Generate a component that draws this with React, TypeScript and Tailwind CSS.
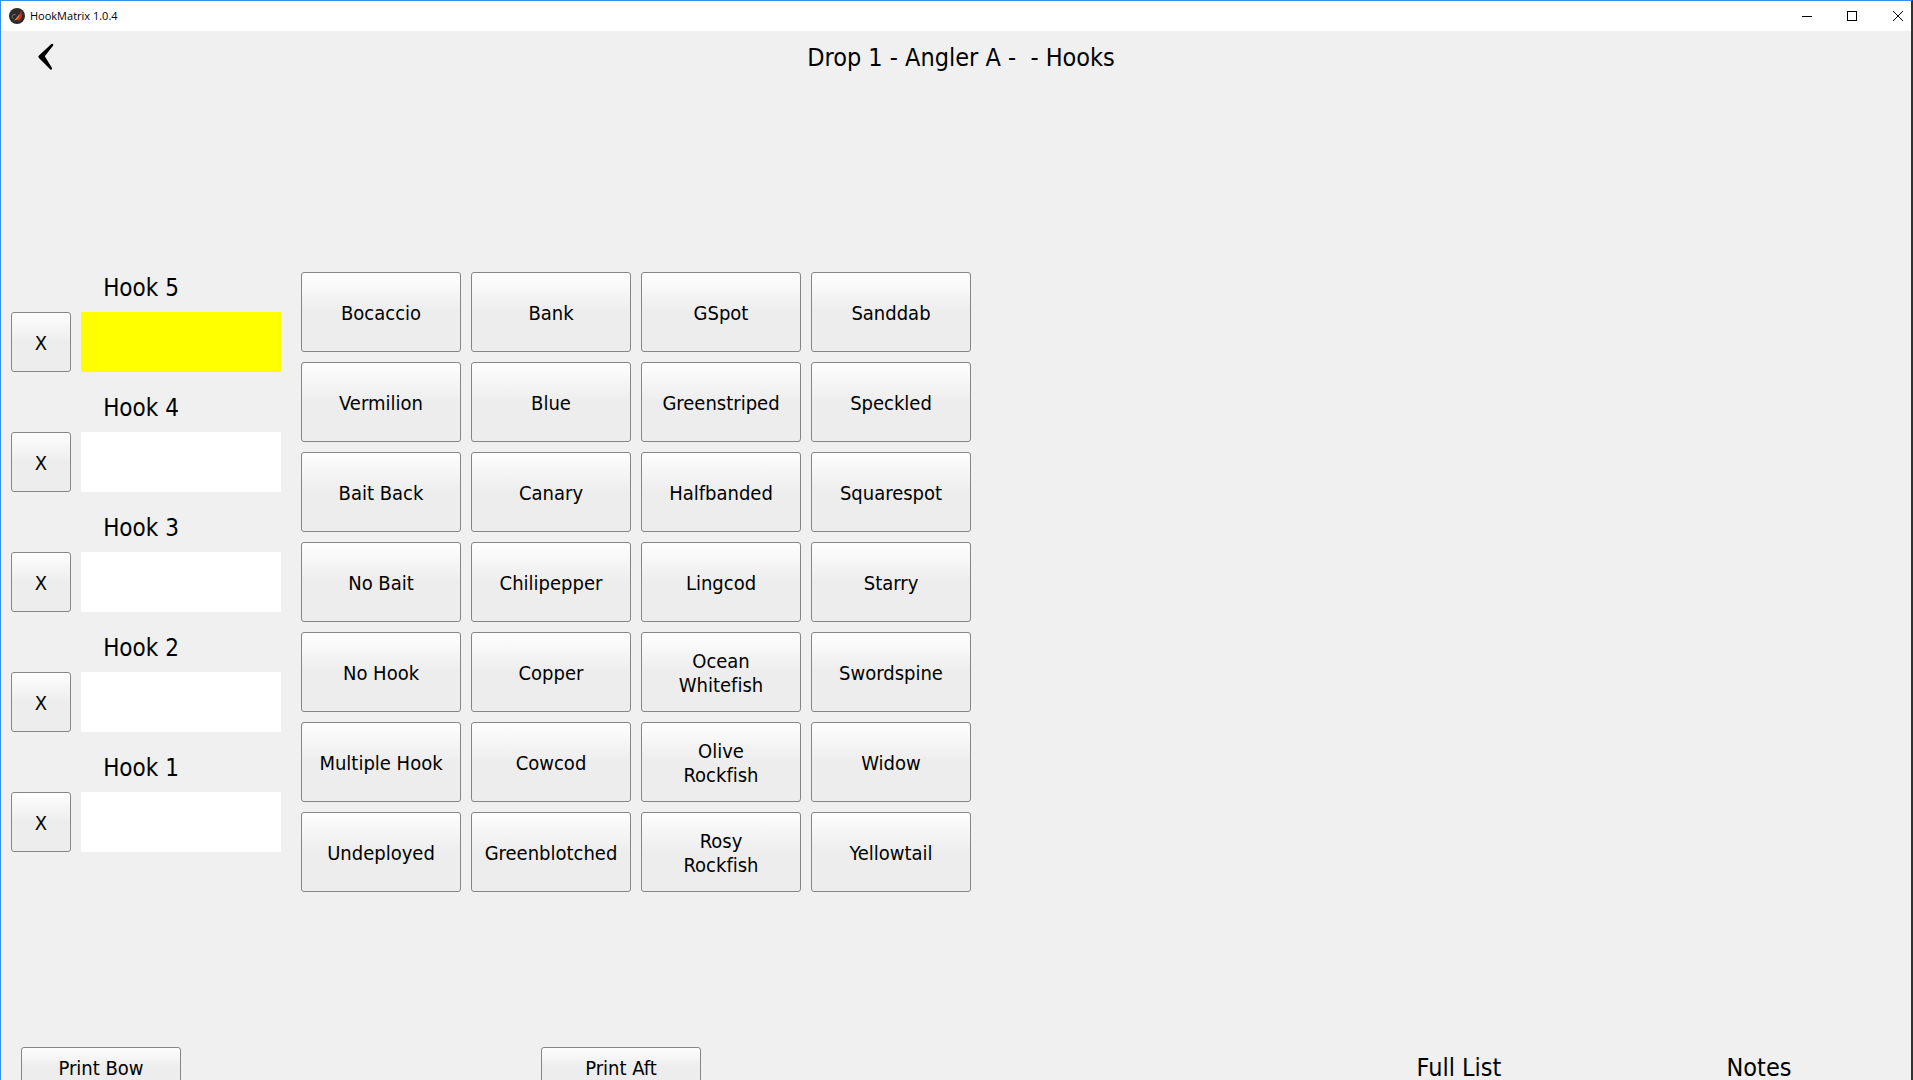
import type { ReactNode } from "react";

const HOOKS = [5, 4, 3, 2, 1];

const SPECIES = [
  "Bocaccio", "Bank", "GSpot", "Sanddab",
  "Vermilion", "Blue", "Greenstriped", "Speckled",
  "Bait Back", "Canary", "Halfbanded", "Squarespot",
  "No Bait", "Chilipepper", "Lingcod", "Starry",
  "No Hook", "Copper", "Ocean\nWhitefish", "Swordspine",
  "Multiple Hook", "Cowcod", "Olive\nRockfish", "Widow",
  "Undeployed", "Greenblotched", "Rosy\nRockfish", "Yellowtail",
];

function PushButton({ size, label, children }: { size: string; label?: string; children: ReactNode }) {
  return (
    <button
      type="button"
      aria-label={label}
      className={`${size} shrink-0 whitespace-pre rounded-[3px] border border-[#868686] bg-linear-to-b from-[#fefefe] to-[#ededed] to-50% pt-px text-center text-xl leading-6 hover:to-[#e0e0e0]`}
    >
      {children}
    </button>
  );
}

function AppIcon() {
  return (
    <svg viewBox="0 0 16 16" className="size-4" aria-hidden="true">
      <circle cx="8" cy="8" r="8" fill="#2f2a2d" />
      <path d="M12 2.5C13.5 6 13.5 10 10.5 12.5L6 12C9 9.5 11 6.5 12 2.5Z" fill="#c0311f" />
      <path d="M10.5 6C10.5 9 8.5 12 5 12.5C7.5 10 8.5 8.5 10.5 6Z" fill="#dd8f3a" />
      <path d="M6.5 6.5C3 6 2 9.5 4.5 10.5" fill="none" stroke="#7d777a" strokeWidth="1" />
    </svg>
  );
}

function TitleBar() {
  return (
    <div className="flex h-[30px] shrink-0 items-center bg-white pl-2">
      <AppIcon />
      <span className="ml-[5px] font-['Open_Sans','Noto_Sans',sans-serif] text-[11px]">HookMatrix 1.0.4</span>
      <div className="ml-auto flex">
        <button type="button" aria-label="Minimize" className="grid h-[30px] w-11 place-items-center">
          <svg viewBox="0 0 10 10" className="size-[10px]" shapeRendering="crispEdges"><path d="M0 5.5H10" stroke="#000" /></svg>
        </button>
        <button type="button" aria-label="Maximize" className="grid h-[30px] w-[46px] place-items-center">
          <svg viewBox="0 0 10 10" className="size-[10px]" shapeRendering="crispEdges"><path d="M.5 .5H9.5V9.5H.5Z" fill="none" stroke="#000" /></svg>
        </button>
        <button type="button" aria-label="Close" className="grid h-[30px] w-9 place-items-center pl-[10px]">
          <svg viewBox="0 0 10 10" className="size-[10px]"><path d="M0 0L10 10M10 0L0 10" stroke="#000" /></svg>
        </button>
      </div>
    </div>
  );
}

export default function App() {
  return (
    <div className="flex h-screen flex-col overflow-hidden border-t border-r-2 border-l border-t-[#3390ee] border-r-[#333333] border-l-[#3390ee] bg-[#f0f0f0] font-['DejaVu_Sans_Condensed','Noto_Sans',sans-serif] text-black [font-variant-ligatures:none]">
      <TitleBar />
      <header className="grid h-[52px] shrink-0 grid-cols-[90px_1fr_80px] items-center">
        <button type="button" aria-label="Back" className="grid h-full place-items-center">
          <svg viewBox="0 0 16 28" className="h-7 w-4" aria-hidden="true">
            <path d="M13.4 1Q15.8 .2 15.2 2.6L6.8 13.2L14 25Q14.4 27.4 12.4 26.6L.7 14.8Q0 13.8 .7 12.8Z" fill="#000" />
          </svg>
        </button>
        <h1 className="pt-[2px] text-center text-[25px] leading-8 whitespace-pre">{"Drop 1 - Angler A -  - Hooks"}</h1>
      </header>

      <main className="flex flex-1 items-start pt-[179px]">
        <section className="flex w-[280px] shrink-0 flex-col gap-[10px]">
          {HOOKS.map((n) => (
            <div key={n}>
              <label htmlFor={`hook-${n}`} className="grid h-[50px] place-items-center pt-[2px] text-2xl">
                {`Hook ${n}`}
              </label>
              <div className="flex gap-[10px] pl-[10px]">
                <PushButton size="size-[60px]" label={`Clear hook ${n}`}>X</PushButton>
                <input
                  id={`hook-${n}`}
                  type="text"
                  className={`h-[60px] min-w-0 flex-1 px-2 text-xl outline-none ${n === 5 ? "bg-[#ffff00]" : "bg-white"}`}
                />
              </div>
            </div>
          ))}
        </section>
        <section className="mt-[10px] ml-5 grid grid-cols-4 gap-[10px]">
          {SPECIES.map((name) => (
            <PushButton key={name} size="h-20 w-40">{name}</PushButton>
          ))}
        </section>
      </main>

      <footer className="flex h-[33px] shrink-0 items-start pr-[72px] pl-5">
        <PushButton size="h-10 w-40">Print Bow</PushButton>
        <div className="ml-[360px]">
          <PushButton size="h-10 w-40">Print Aft</PushButton>
        </div>
        <div className="ml-auto flex gap-[140px]">
          <button type="button" className="h-10 w-40 pt-[2px] text-[25px] leading-6">Full List</button>
          <button type="button" className="h-10 w-40 pt-[2px] text-[25px] leading-6">Notes</button>
        </div>
      </footer>
    </div>
  );
}
